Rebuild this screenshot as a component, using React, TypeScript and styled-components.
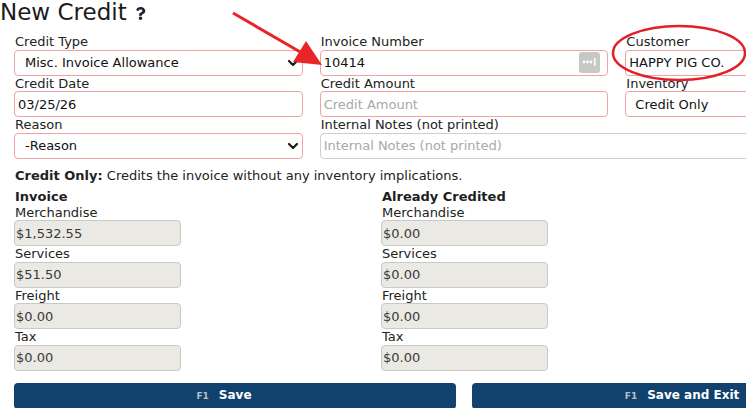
import React from "react";
import styled, {createGlobalStyle} from "styled-components";
import {FaQuestion} from "react-icons/fa";

const GlobalStyle = createGlobalStyle`
  html, body {
    margin: 0;
    padding: 0;
    overflow: hidden;
    background: #fff;
  }

  body {
    font-family: "DejaVu Sans", Verdana, sans-serif;
    font-size: 13px;
    color: #222;
  }
`

const Page = styled.div`
  position: relative;
  width: 928px;
`

const Title = styled.h1`
  margin: 0 0 10px 0;
  font-size: 23px;
  font-weight: normal;
  line-height: 24px;
  color: #1b1b1b;
  display: flex;
  align-items: center;
`

const HelpIcon = styled.span`
  display: inline-flex;
  margin-left: 7px;
  margin-top: 3px;
  color: #1c2230;
`

const Body = styled.div`
  width: 900px;
  padding-left: 14px;
`

const FormGrid = styled.div`
  display: grid;
  grid-template-columns: 1fr 1fr 1fr;
  column-gap: 17px;
`

const Field = styled.div<{ span?: number }>`
  display: flex;
  flex-direction: column;
  grid-column: ${({span}) => span ? `span ${span}` : "auto"};
`

const Label = styled.label`
  display: block;
  line-height: 15.5px;
  font-size: 13px;
  color: #222;
  padding-left: 1px;
`

const BoxWrap = styled.div`
  position: relative;
`

const TextInput = styled.input<{ muted?: boolean }>`
  box-sizing: border-box;
  width: 100%;
  height: 26px;
  padding: 0 3px;
  border: 1px solid ${({muted}) => muted ? "#cfcfcf" : "#f0a3a0"};
  border-radius: 4px;
  font-family: "DejaVu Sans", Verdana, sans-serif;
  font-size: 13px;
  color: #111;
  background: #fff;
  outline: none;

  &::placeholder {
    color: #a8a8a8;
  }
`

const Select = styled.select<{ inset?: number }>`
  box-sizing: border-box;
  width: 100%;
  height: 26px;
  padding: 0 0 0 ${({inset}) => inset ?? 9}px;
  border: 1px solid #f0a3a0;
  border-radius: 4px;
  font-family: "DejaVu Sans", Verdana, sans-serif;
  font-size: 13px;
  color: #111;
  background: #fff;
  appearance: none;
  outline: none;
`

const Chevron = styled.svg`
  position: absolute;
  right: 4px;
  top: 9px;
  pointer-events: none;
`

const LookupButton = styled.button`
  position: absolute;
  right: 8px;
  top: 2px;
  width: 21px;
  height: 21px;
  padding: 0;
  border: none;
  border-radius: 3px;
  background: #c7c7c7;
  display: flex;
  align-items: center;
  justify-content: center;
`

const Note = styled.p`
  margin: 9px 0 5px 1px;
  line-height: 16px;
  font-size: 13px;
  color: #222;
`

const AmountGrid = styled.div`
  display: grid;
  grid-template-columns: 367px 1fr;
`

const AmountCol = styled.div`
  display: flex;
  flex-direction: column;
`

const SectionHead = styled.div`
  font-weight: bold;
  line-height: 16px;
  padding-left: 1px;
  color: #1e1e1e;
`

const ReadOnly = styled.input`
  box-sizing: border-box;
  width: 167px;
  height: 26px;
  padding: 0 1px;
  border: 1px solid #c9c9c7;
  border-radius: 4px;
  background: #ebe9e4;
  font-family: "DejaVu Sans", Verdana, sans-serif;
  font-size: 13px;
  color: #3a3a3a;
  outline: none;
`

const ButtonRow = styled.div`
  display: grid;
  grid-template-columns: 1fr 1fr;
  column-gap: 16px;
  margin-top: 12px;
`

const ActionButton = styled.button`
  height: 26px;
  border: none;
  border-radius: 4px;
  background: #11416d;
  color: #fff;
  font-family: "DejaVu Sans", Verdana, sans-serif;
  font-size: 12px;
  font-weight: bold;
  display: flex;
  align-items: center;
  justify-content: center;
  padding: 0 22px 2px 0;
`

const KeyHint = styled.span`
  font-size: 9px;
  font-weight: bold;
  color: #b9bec6;
  margin-right: 10px;
  margin-top: 2px;
`

const Annotations = styled.svg`
  position: absolute;
  left: 0;
  top: 0;
  pointer-events: none;
`

function SelectBox(props: { value: string, inset?: number }) {
    return (
        <BoxWrap>
            <Select inset={props.inset} value={props.value} onChange={() => undefined}>
                <option>{props.value}</option>
            </Select>
            <Chevron width="12" height="8" viewBox="0 0 12 8">
                <polyline points="2,2 6,6 10,2" fill="none" stroke="#1a1a1a" strokeWidth="2.2"
                          strokeLinecap="round" strokeLinejoin="round"/>
            </Chevron>
        </BoxWrap>
    );
}

function AmountField(props: { label: string, value: string }) {
    return (
        <>
            <Label>{props.label}</Label>
            <ReadOnly readOnly value={props.value}/>
        </>
    );
}

const invoiceAmounts = [
    {label: "Merchandise", value: "$1,532.55"},
    {label: "Services", value: "$51.50"},
    {label: "Freight", value: "$0.00"},
    {label: "Tax", value: "$0.00"},
];

const creditedAmounts = [
    {label: "Merchandise", value: "$0.00"},
    {label: "Services", value: "$0.00"},
    {label: "Freight", value: "$0.00"},
    {label: "Tax", value: "$0.00"},
];

export default function App() {
    return (
        <Page>
            <GlobalStyle/>
            <Title>
                New Credit
                <HelpIcon><FaQuestion size={13}/></HelpIcon>
            </Title>
            <Body>
                <FormGrid>
                    <Field>
                        <Label>Credit Type</Label>
                        <SelectBox value="Misc. Invoice Allowance" inset={10}/>
                    </Field>
                    <Field>
                        <Label>Invoice Number</Label>
                        <BoxWrap>
                            <TextInput defaultValue="10414"/>
                            <LookupButton>
                                <svg width="15" height="10" viewBox="0 0 15 10">
                                    <circle cx="2" cy="5" r="1.4" fill="#fff"/>
                                    <circle cx="5.5" cy="5" r="1.4" fill="#fff"/>
                                    <circle cx="9" cy="5" r="1.4" fill="#fff"/>
                                    <rect x="12" y="1" width="1.5" height="8" fill="#fff"/>
                                </svg>
                            </LookupButton>
                        </BoxWrap>
                    </Field>
                    <Field>
                        <Label>Customer</Label>
                        <TextInput defaultValue="HAPPY PIG CO."/>
                    </Field>
                    <Field>
                        <Label>Credit Date</Label>
                        <TextInput defaultValue="03/25/26"/>
                    </Field>
                    <Field>
                        <Label>Credit Amount</Label>
                        <TextInput placeholder="Credit Amount"/>
                    </Field>
                    <Field>
                        <Label>Inventory</Label>
                        <SelectBox value="Credit Only" inset={9}/>
                    </Field>
                    <Field>
                        <Label>Reason</Label>
                        <SelectBox value="-Reason" inset={10}/>
                    </Field>
                    <Field span={2}>
                        <Label>Internal Notes (not printed)</Label>
                        <TextInput muted placeholder="Internal Notes (not printed)"/>
                    </Field>
                </FormGrid>

                <Note><b>Credit Only:</b> Credits the invoice without any inventory implications.</Note>

                <AmountGrid>
                    <AmountCol>
                        <SectionHead>Invoice</SectionHead>
                        {invoiceAmounts.map(a => <AmountField key={a.label} label={a.label} value={a.value}/>)}
                    </AmountCol>
                    <AmountCol>
                        <SectionHead>Already Credited</SectionHead>
                        {creditedAmounts.map(a => <AmountField key={a.label} label={a.label} value={a.value}/>)}
                    </AmountCol>
                </AmountGrid>

                <ButtonRow>
                    <ActionButton><KeyHint>F1</KeyHint>Save</ActionButton>
                    <ActionButton><KeyHint>F1</KeyHint>Save and Exit</ActionButton>
                </ButtonRow>
            </Body>

            <Annotations width="746" height="408" viewBox="0 0 746 408">
                <line x1="233" y1="13" x2="302" y2="53" stroke="#e8262a" strokeWidth="3"/>
                <polygon points="322,65 293,62 306,41" fill="#e8262a"/>
                <ellipse cx="679" cy="53" rx="66" ry="27" fill="none" stroke="#e2202a" strokeWidth="2.5"/>
            </Annotations>
        </Page>
    );
}
